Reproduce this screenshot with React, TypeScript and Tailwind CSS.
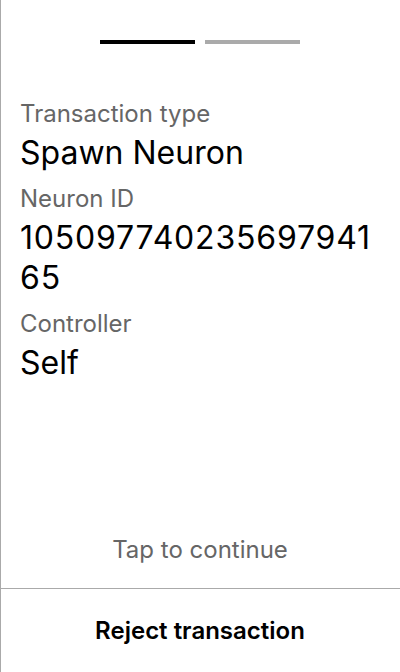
export default function App() {
  const items = [
    { label: "Transaction type", value: "Spawn Neuron", cls: "" },
    { label: "Neuron ID", value: "10509774023569794165", cls: "tracking-[0.8px]" },
    { label: "Controller", value: "Self", cls: "" },
  ];
  return (
    <div
      className="h-[672px] w-[400px] bg-white shadow-[inset_1px_0_0_#aaaaaa] flex flex-col"
      style={{ fontFamily: "Inter, 'Noto Sans', sans-serif" }}
    >
      <div className="flex justify-center gap-[10px] pt-10">
        <div className="w-[95px] h-1 bg-black" />
        <div className="w-[95px] h-1 bg-[#aaaaaa]" />
      </div>
      <div className="flex flex-col gap-[10px] px-5 pt-[54px]">
        {items.map((it) => (
          <div key={it.label} className="flex flex-col">
            <div className="text-[24px] leading-[32px] text-[#666666]">{it.label}</div>
            <div className={`text-[32px] leading-[40px] text-black break-all mt-[3px] ${it.cls}`}>{it.value}</div>
          </div>
        ))}
      </div>
      <div className="flex-1" />
      <div className="text-center text-[24px] leading-[32px] text-[#666666] pb-[22px]">Tap to continue</div>
      <div className="h-[84px] border-t border-[#aaaaaa] flex items-center justify-center text-[24px] leading-[32px] font-semibold text-black">
        Reject transaction
      </div>
    </div>
  );
}
